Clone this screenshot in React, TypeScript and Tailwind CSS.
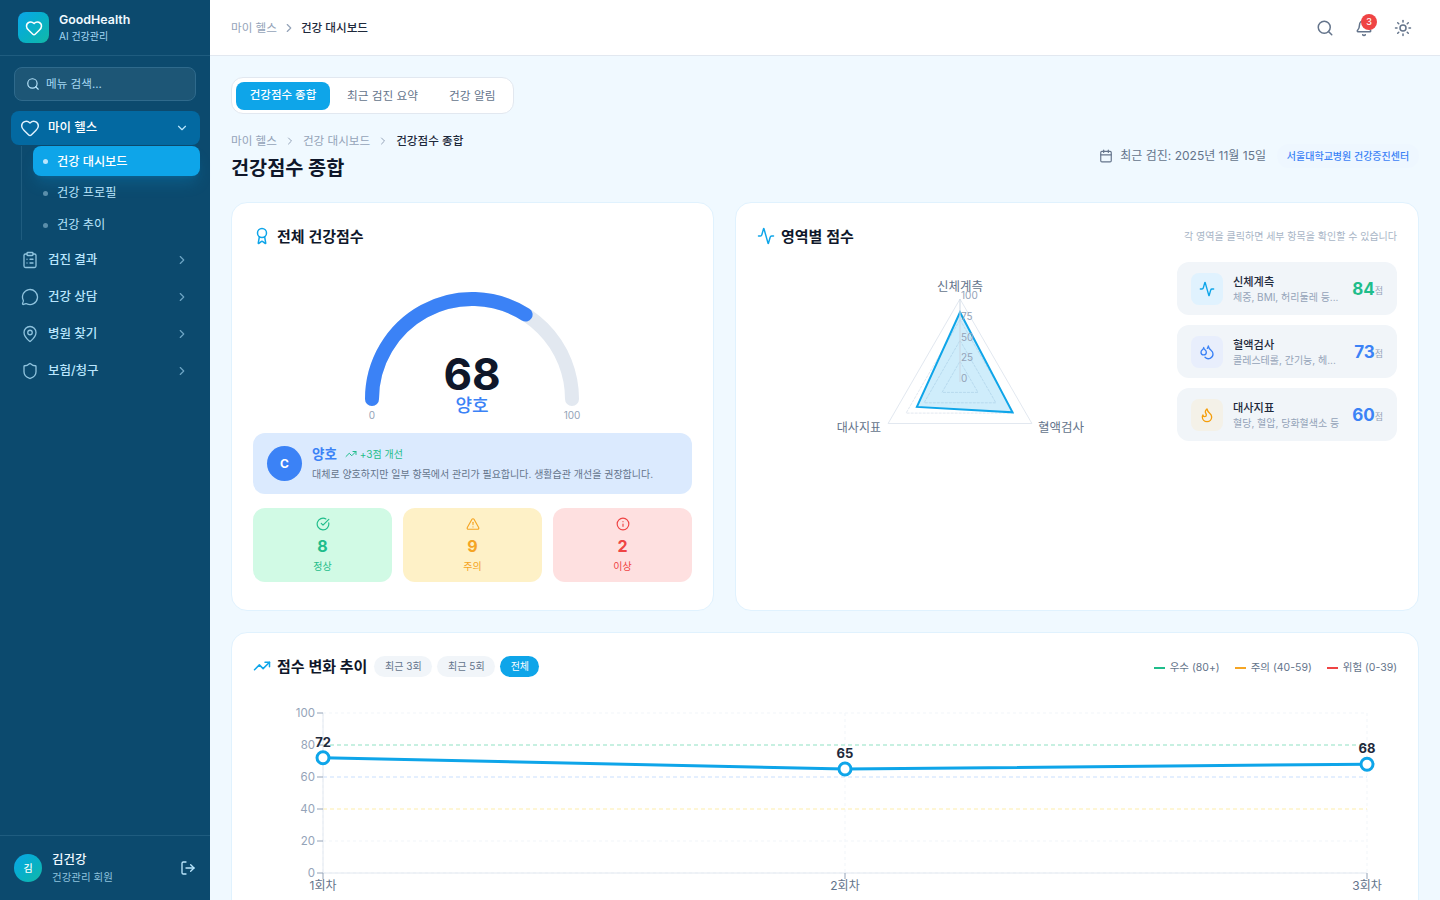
import React from 'react';
import {
  Activity,
  AlertTriangle,
  Award,
  Bell,
  Calendar,
  CheckCircle,
  ChevronDown,
  ChevronRight,
  ClipboardList,
  Droplets,
  Flame,
  Heart,
  Info,
  LogOut,
  MapPin,
  MessageCircle,
  Search,
  Shield,
  Sun,
  TrendingUp,
} from 'lucide-react';

const navItems = [
  { label: '검진 결과', Icon: ClipboardList },
  { label: '건강 상담', Icon: MessageCircle },
  { label: '병원 찾기', Icon: MapPin },
  { label: '보험/청구', Icon: Shield },
];

const areaScores = [
  { title: '신체계측', desc: '체중, BMI, 허리둘레 등...', score: 84, Icon: Activity, box: 'bg-[#e0f2fe]', icon: 'text-[#0ea5e9]', color: 'text-[#1fbd8b]' },
  { title: '혈액검사', desc: '콜레스테롤, 간기능, 헤...', score: 73, Icon: Droplets, box: 'bg-[#e8eefc]', icon: 'text-[#3b82f6]', color: 'text-[#3b82f6]' },
  { title: '대사지표', desc: '혈당, 혈압, 당화혈색소 등', score: 60, Icon: Flame, box: 'bg-[#f4f1e8]', icon: 'text-[#f59e0b]', color: 'text-[#3b82f6]' },
];

const radarPoint = (value: number, index: number) => {
  const angle = (-90 + index * 120) * (Math.PI / 180);
  const r = (83 * value) / 100;
  return `${(960 + r * Math.cos(angle)).toFixed(1)},${(382 + r * Math.sin(angle)).toFixed(1)}`;
};

const ring = (value: number) => [0, 1, 2].map((i) => radarPoint(value, i)).join(' ');

const Sidebar = () => (
  <aside className="w-[210px] h-full shrink-0 bg-[#0c4a6e] flex flex-col">
    <div className="h-[56px] shrink-0 border-b border-[#1f5c7f] flex items-center pl-[18px] gap-[10px]">
      <div className="w-[31px] h-[31px] rounded-lg bg-gradient-to-br from-[#0ea5e9] to-[#14b8a6] flex items-center justify-center">
        <Heart size={18} className="text-white" strokeWidth={2} />
      </div>
      <div className="flex flex-col">
        <span className="text-[12.4px] leading-[16px] font-semibold text-[#f0f9ff]">GoodHealth</span>
        <span className="text-[10px] leading-[14px] mt-[1px] text-[#a5d8f3]">AI 건강관리</span>
      </div>
    </div>
    <div className="px-[14px] pt-[11px]">
      <div className="h-[34px] rounded-lg border border-[#2f6a8c] bg-[#1d5676] flex items-center pl-[11px] gap-[6px]">
        <Search size={14} className="text-[#bae6fd]" />
        <span className="mt-[1px] text-[11.6px] text-[#a5d8f3]">메뉴 검색...</span>
      </div>
    </div>
    <nav className="pl-[11px] pr-[10px] pt-[10px] flex flex-col">
      <div className="h-[34px] rounded-lg bg-[#0369a1] flex items-center pl-[9px] pr-[11px] text-white">
        <Heart size={20} className="text-[#e0f2fe]" strokeWidth={1.75} />
        <span className="ml-[8px] text-[12.5px] font-medium flex-1">마이 헬스</span>
        <ChevronDown size={14} className="text-[#bae6fd]" />
      </div>
      <div className="ml-[10px] mt-[1px] pl-[11px] border-l border-[#1f5c7f] flex flex-col gap-[2px]">
        <div className="h-[30px] rounded-lg bg-[#0ea5e9] flex items-center pl-[10px] shadow-lg shadow-[#0ea5e9]/20">
          <span className="w-[5px] h-[5px] rounded-full bg-[#bae6fd]" />
          <span className="ml-[9px] mt-[2px] text-[12.2px] font-medium text-white">건강 대시보드</span>
        </div>
        {['건강 프로필', '건강 추이'].map((label) => (
          <div key={label} className="h-[30px] flex items-center pl-[10px]">
            <span className="w-[5px] h-[5px] rounded-full bg-[#5b8eaa]" />
            <span className="ml-[9px] text-[12.2px] text-[#bae6fd]">{label}</span>
          </div>
        ))}
      </div>
      <div className="mt-[3px] flex flex-col gap-[3px]">
        {navItems.map(({ label, Icon }) => (
          <div key={label} className="h-[34px] flex items-center pl-[10px] pr-[11px]">
            <Icon size={18} className="text-[#8fc3de]" strokeWidth={1.75} />
            <span className="ml-[9px] text-[12.5px] font-medium text-[#bae6fd] flex-1">{label}</span>
            <ChevronRight size={14} className="text-[#6ea5c4]" />
          </div>
        ))}
      </div>
    </nav>
    <div className="mt-auto h-[65px] border-t border-[#1f5c7f] flex items-center pl-[14px] pr-[14px]">
      <div className="w-[28px] h-[28px] rounded-full bg-gradient-to-br from-[#0ea5e9] to-[#14b8a6] flex items-center justify-center text-[10px] font-medium text-white">김</div>
      <div className="ml-[10px] mt-[1px] flex flex-col flex-1">
        <span className="text-[12.5px] leading-[16px] font-medium text-[#f0f9ff]">김건강</span>
        <span className="text-[10.5px] leading-[14px] mt-[3px] text-[#8fc3de]">건강관리 회원</span>
      </div>
      <LogOut size={16} className="text-[#bae6fd]" />
    </div>
  </aside>
);

const TopBar = () => (
  <header className="h-[56px] shrink-0 bg-white border-b border-[#e2e8f0] flex items-center pl-[21px] pr-[28px]">
    <span className="mt-[2px] text-[11.6px] text-[#94a3b8]">마이 헬스</span>
    <ChevronRight size={14} className="mx-[5px] text-[#94a3b8]" />
    <span className="mt-[2px] text-[11.6px] font-medium text-[#1e293b]">건강 대시보드</span>
    <div className="ml-auto flex items-center gap-[21px]">
      <Search size={18} className="text-[#64748b]" />
      <div className="relative">
        <Bell size={18} className="text-[#64748b]" />
        <span className="absolute -top-[5px] -right-[4px] w-[16px] h-[16px] rounded-full bg-[#ef4444] text-white text-[9px] font-medium flex items-center justify-center">3</span>
      </div>
      <Sun size={18} className="text-[#64748b]" />
    </div>
  </header>
);

const GaugeCard = () => (
  <section className="h-[409px] rounded-2xl bg-white border border-[#e0f2fe] px-[21px] pt-[21px] flex flex-col">
    <div className="h-[24px] flex items-center gap-[6px]">
      <Award size={18} className="text-[#0ea5e9]" />
      <h2 className="mt-[2px] text-[15px] font-semibold text-[#0f172a]">전체 건강점수</h2>
    </div>
    <svg viewBox="253 270 439 160" className="w-[439px] h-[160px] mt-[22px] shrink-0">
      <path d="M372 399A100 100 0 0 1 572 399" fill="none" stroke="#e2e8f0" strokeWidth={14} strokeLinecap="round" />
      <path d="M372 399A100 100 0 0 1 525.6 314.6" fill="none" stroke="#3b82f6" strokeWidth={14} strokeLinecap="round" />
      <text x={472} y={390} textAnchor="middle" fontSize={44} fontWeight={700} fill="#0f172a">68</text>
      <text x={472} y={412} textAnchor="middle" fontSize={18} fontWeight={500} fill="#3b82f6">양호</text>
      <text x={372} y={419} textAnchor="middle" fontSize={10} fill="#94a3b8">0</text>
      <text x={572} y={419} textAnchor="middle" fontSize={10} fill="#94a3b8">100</text>
    </svg>
    <div className="mt-[3px] h-[61px] rounded-xl bg-[#dbeafe] flex items-center pl-[14px]">
      <div className="w-[35px] h-[35px] rounded-full bg-[#3b82f6] flex items-center justify-center text-white text-[12px] font-bold">C</div>
      <div className="ml-[10px]">
        <div className="flex items-center h-[18px] -mt-[1px]">
          <span className="text-[13.5px] font-semibold text-[#3b82f6]">양호</span>
          <TrendingUp size={12} className="ml-[8px] text-[#1fbd8b]" />
          <span className="ml-[3px] text-[10px] text-[#1fbd8b]">+3점 개선</span>
        </div>
        <p className="mt-[4px] text-[10px] leading-[14px] text-[#64748b]">대체로 양호하지만 일부 항목에서 관리가 필요합니다. 생활습관 개선을 권장합니다.</p>
      </div>
    </div>
    <div className="mt-[14px] grid grid-cols-3 gap-[11px]">
      {[
        { Icon: CheckCircle, n: 8, label: '정상', bg: 'bg-[#d1fae5]', fg: 'text-[#1fbd8b]' },
        { Icon: AlertTriangle, n: 9, label: '주의', bg: 'bg-[#fef1c7]', fg: 'text-[#f5a524]' },
        { Icon: Info, n: 2, label: '이상', bg: 'bg-[#fee0e0]', fg: 'text-[#ef4444]' },
      ].map(({ Icon, n, label, bg, fg }) => (
        <div key={label} className={`h-[74px] rounded-xl ${bg} ${fg} flex flex-col items-center pt-[9px]`}>
          <Icon size={14} />
          <span className="mt-[4px] text-[16px] leading-[22px] font-bold">{n}</span>
          <span className="mt-[2px] text-[10px] leading-[14px]">{label}</span>
        </div>
      ))}
    </div>
  </section>
);

const RadarCard = () => (
  <section className="h-[409px] rounded-2xl bg-white border border-[#e0f2fe] px-[21px] pt-[21px]">
    <div className="h-[24px] flex items-center gap-[6px]">
      <Activity size={18} className="text-[#0ea5e9]" />
      <h2 className="mt-[2px] text-[15px] font-semibold text-[#0f172a] flex-1">영역별 점수</h2>
      <span className="mt-[1px] text-[10px] text-[#a8b5c6]">각 영역을 클릭하면 세부 항목을 확인할 수 있습니다</span>
    </div>
    <div className="mt-[14px] flex">
      <svg viewBox="757 262 420 180" className="w-[420px] h-[180px] shrink-0">
        {[25, 50, 75].map((v) => (
          <polygon key={v} points={ring(v)} fill="none" stroke="#e2e8f0" strokeWidth={1} strokeDasharray="3 1" />
        ))}
        <polygon points={ring(100)} fill="none" stroke="#e2e8f0" strokeWidth={1} />
        <polygon points={`${radarPoint(84, 0)} ${radarPoint(73, 1)} ${radarPoint(60, 2)}`} fill="#0ea5e9" fillOpacity={0.2} stroke="#0ea5e9" strokeWidth={2} />
        <line x1={960} y1={299} x2={960} y2={382} stroke="#cbd5e1" strokeWidth={1} />
        <text x={960} y={291} textAnchor="middle" fontSize={12.5} fill="#64748b">신체계측</text>
        <text x={1038} y={432} fontSize={12.5} fill="#64748b">혈액검사</text>
        <text x={881} y={432} textAnchor="end" fontSize={12} fill="#64748b">대사지표</text>
        {[
          { t: '100', y: 299 },
          { t: '75', y: 320 },
          { t: '50', y: 341 },
          { t: '25', y: 361 },
          { t: '0', y: 382 },
        ].map(({ t, y }) => (
          <text key={t} x={961} y={y} fontSize={10} fill="#94a3b8">{t}</text>
        ))}
      </svg>
      <div className="w-[220px] flex flex-col gap-[10px]">
        {areaScores.map(({ title, desc, score, Icon, box, icon, color }) => (
          <div key={title} className="h-[53px] rounded-xl bg-[#f1f5f9] flex items-center pl-[14px] pr-[14px]">
            <div className={`w-[32px] h-[32px] rounded-lg ${box} flex items-center justify-center shrink-0`}>
              <Icon size={16} className={icon} />
            </div>
            <div className="ml-[10px] flex-1 min-w-0">
              <div className="text-[11.2px] leading-[16px] font-medium text-[#1e293b]">{title}</div>
              <div className="text-[10px] leading-[14px] text-[#94a3b8] whitespace-nowrap">{desc}</div>
            </div>
            <span className={`mt-[2px] text-[17px] font-bold ${color}`}>{score}</span>
            <span className="text-[9px] mt-[4px] text-[#94a3b8]">점</span>
          </div>
        ))}
      </div>
    </div>
  </section>
);

const TrendCard = () => (
  <section className="mt-[21px] h-[320px] rounded-2xl bg-white border border-[#e0f2fe] px-[21px] pt-[21px]">
    <div className="h-[24px] flex items-center">
      <TrendingUp size={18} className="text-[#0ea5e9]" />
      <h2 className="ml-[6px] mt-[2px] text-[15px] font-semibold text-[#0f172a]">점수 변화 추이</h2>
      <span className="ml-[7px] h-[21px] w-[58px] rounded-full bg-[#f1f5f9] text-[#64748b] text-[10px] flex items-center justify-center">최근 3회</span>
      <span className="ml-[5px] h-[21px] w-[58px] rounded-full bg-[#f1f5f9] text-[#64748b] text-[10px] flex items-center justify-center">최근 5회</span>
      <span className="ml-[5px] h-[21px] w-[39px] rounded-full bg-[#0ea5e9] text-white text-[10px] flex items-center justify-center">전체</span>
      <div className="ml-auto mt-[3px] flex items-center gap-[15px] text-[10.5px] text-[#64748b]">
        {[
          { label: '우수 (80+)', line: 'bg-[#1fbd8b]' },
          { label: '주의 (40-59)', line: 'bg-[#f5a524]' },
          { label: '위험 (0-39)', line: 'bg-[#ef4444]' },
        ].map(({ label, line }) => (
          <span key={label} className="flex items-center gap-[5px]">
            <span className={`w-[11px] h-[2px] ${line}`} />
            {label}
          </span>
        ))}
      </div>
    </div>
    <svg viewBox="253 695 1144 210" className="mt-[17px] w-[1144px] h-[210px]">
      {[100, 20, 0].map((v) => (
        <line key={v} x1={323} x2={1367} y1={873 - v * 1.6} y2={873 - v * 1.6} stroke="#f1f5f9" strokeWidth={1} strokeDasharray="3 3" />
      ))}
      {[323, 845, 1367].map((x) => (
        <line key={x} x1={x} x2={x} y1={713} y2={873} stroke="#f1f5f9" strokeWidth={1} strokeDasharray="3 3" />
      ))}
      <line x1={323} x2={1367} y1={745} y2={745} stroke="#b5ecd7" strokeWidth={1.5} strokeDasharray="4 3" />
      <line x1={323} x2={1367} y1={777} y2={777} stroke="#dbeafe" strokeWidth={1.5} strokeDasharray="4 3" />
      <line x1={323} x2={1367} y1={809} y2={809} stroke="#fef3c7" strokeWidth={1.5} strokeDasharray="4 3" />
      <line x1={323} x2={1367} y1={873} y2={873} stroke="#e2e8f0" strokeWidth={1} />
      <line x1={323} x2={323} y1={713} y2={873} stroke="#e2e8f0" strokeWidth={1} />
      {[0, 20, 40, 60, 80, 100].map((v) => (
        <g key={v}>
          <line x1={317} x2={323} y1={873 - v * 1.6} y2={873 - v * 1.6} stroke="#94a3b8" strokeWidth={1} />
          <text x={315} y={877 - v * 1.6} textAnchor="end" fontSize={11.5} fill="#94a3b8">{v}</text>
        </g>
      ))}
      {[
        { x: 323, t: '1회차' },
        { x: 845, t: '2회차' },
        { x: 1367, t: '3회차' },
      ].map(({ x, t }) => (
        <g key={t}>
          <line x1={x} x2={x} y1={873} y2={879} stroke="#94a3b8" strokeWidth={1} />
          <text x={x} y={890} textAnchor="middle" fontSize={12} fill="#64748b">{t}</text>
        </g>
      ))}
      <polyline points="323,757.8 845,769 1367,764.2" fill="none" stroke="#0ea5e9" strokeWidth={3} />
      {[
        { x: 323, y: 757.8, v: 72 },
        { x: 845, y: 769, v: 65 },
        { x: 1367, y: 764.2, v: 68 },
      ].map(({ x, y, v }) => (
        <g key={v}>
          <circle cx={x} cy={y} r={6} fill="#fff" stroke="#0ea5e9" strokeWidth={3} />
          <text x={x} y={y - 11} textAnchor="middle" fontSize={13} fontWeight={700} fill="#1e293b">{v}</text>
        </g>
      ))}
    </svg>
  </section>
);

const App = () => (
  <div className="w-[1440px] h-[900px] overflow-hidden flex bg-[#f0f9ff] font-[Inter,'Noto_Sans_CJK_KR',sans-serif]">
    <Sidebar />
    <div className="flex-1 min-w-0 flex flex-col">
      <TopBar />
      <main className="px-[21px] pt-[21px]">
        <div className="inline-flex items-center h-[37px] rounded-xl bg-white border border-[#e2e8f0] pl-[4px] pr-[18px]">
          <span className="h-[28px] w-[94px] pt-[1px] rounded-lg bg-[#0ea5e9] text-white text-[11.5px] font-medium flex items-center justify-center">건강점수 종합</span>
          <span className="ml-[17px] mt-[2px] text-[11.7px] text-[#64748b]">최근 검진 요약</span>
          <span className="ml-[31px] mt-[2px] text-[11.7px] text-[#64748b]">건강 알림</span>
        </div>
        <div className="mt-[18px] flex items-end justify-between">
          <div>
            <div className="flex items-center text-[11.6px] leading-[18px]">
              <span className="text-[#94a3b8]">마이 헬스</span>
              <ChevronRight size={12} className="mx-[7px] text-[#94a3b8]" />
              <span className="text-[#94a3b8]">건강 대시보드</span>
              <ChevronRight size={12} className="mx-[7px] text-[#94a3b8]" />
              <span className="font-medium text-[#1e293b]">건강점수 종합</span>
            </div>
            <h1 className="mt-[3px] text-[19.7px] leading-[30px] font-bold text-[#0f172a]">건강점수 종합</h1>
          </div>
          <div className="flex items-center mb-[15px]">
            <Calendar size={14} className="text-[#64748b]" />
            <span className="ml-[7px] text-[12px] text-[#64748b]">최근 검진: 2025년 11월 15일</span>
            <span className="ml-[11px] mt-[1px] h-[24px] w-[142px] rounded-full bg-[#eef7ff] text-[#3b82f6] text-[10px] font-medium flex items-center justify-center">서울대학교병원 건강증진센터</span>
          </div>
        </div>
        <div className="mt-[19px] grid grid-cols-[483px_684px] gap-[21px]">
          <GaugeCard />
          <RadarCard />
        </div>
        <TrendCard />
      </main>
    </div>
  </div>
);

export default App;
